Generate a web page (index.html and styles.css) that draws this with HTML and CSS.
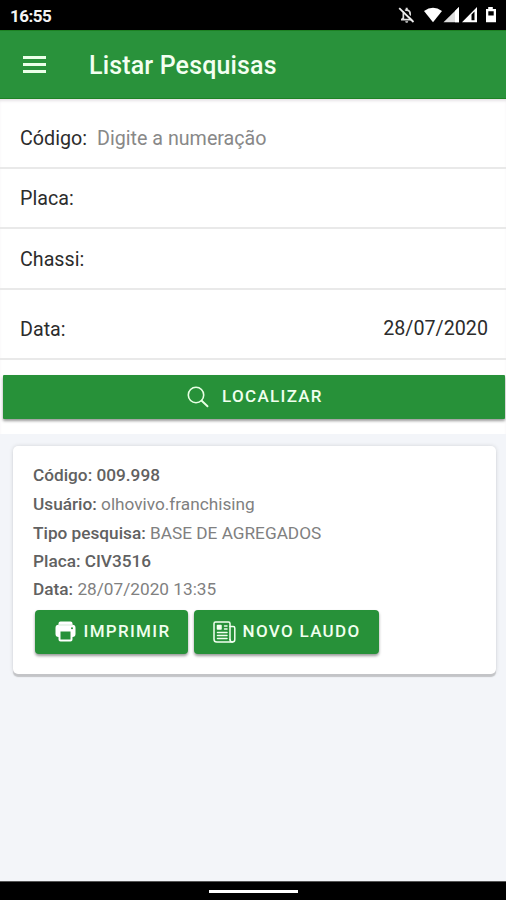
FILE: index.html
```html
<!DOCTYPE html>
<html lang="pt-BR">
<head>
<meta charset="utf-8">
<title>Listar Pesquisas</title>
<link rel="stylesheet" href="styles.css">
</head>
<body>
<div class="app">
  <div class="status">
    <span class="clock">16:55</span>
    <svg class="status-icons" width="102" height="20" viewBox="0 0 102 20" fill="#fff">
      <path d="M3 15.500v-1.500l1.500-1.500V9a4.500 4.700 0 0 1 3.200-4.700V2.800h2v1.500A4.500 4.700 0 0 1 13 9v3.500l1.600 1.500v1.500zM6.200 13.800h5V8.900a2.500 2.800 0 0 0-5 0zM7.200 16.200h3a1.500 1.500 0 0 1-3 0z" fill="#ddd" fill-rule="evenodd"/>
      <path d="M2.500 2.200L17 16" stroke="#000" stroke-width="1.600"/>
      <path d="M1.200 3.200L15.500 17" stroke="#eee" stroke-width="1.800"/>
      <path d="M26 6Q35-.5 44 6L35 17.200z"/>
      <path d="M45.500 17.200H61V2z" fill="#ddd"/><path d="M57 6L61 2v15.200h-4z"/>
      <path d="M64 17.200H79V2zM73.500 9.500v5.800h3V6.500z" fill-rule="evenodd"/>
      <path d="M88 4h2.200V2h4.600v2H98v13.200H88zM90.300 6.300v4.200h5.400V6.300z" fill-rule="evenodd"/>
    </svg>
  </div>
  <header class="toolbar">
    <div class="menu"><i></i><i></i><i></i></div>
    <h1>Listar Pesquisas</h1>
  </header>
  <main class="content">
    <section class="search">
      <div class="field code"><label>Código:</label><span class="hint">Digite a numeração</span></div>
      <div class="field plate"><label>Placa:</label></div>
      <div class="field chassis"><label>Chassi:</label></div>
      <div class="field date"><label>Data:</label><span class="value">28/07/2020</span></div>
      <button class="btn find">
        <svg width="22" height="22" viewBox="0 0 22 22" fill="none" stroke="#e8ffe4" stroke-width="1.600" stroke-linecap="round"><circle cx="9" cy="9" r="7.700"/><path d="M14.700 14.700L20.500 20.300" stroke-width="1.900"/></svg>
        <span>LOCALIZAR</span>
      </button>
    </section>
    <article class="card">
      <p class="l1"><b>Código: 009.998</b></p>
      <p class="l2"><b>Usuário:</b> <span>olhovivo.franchising</span></p>
      <p class="l3"><b>Tipo pesquisa:</b> <span>BASE DE AGREGADOS</span></p>
      <p class="l4"><b>Placa: CIV3516</b></p>
      <p class="l5"><b>Data:</b> <span>28/07/2020 13:35</span></p>
      <div class="actions">
        <button class="btn print">
          <svg width="21" height="21" viewBox="0 0 21 21" fill="#fff"><path d="M5.500.5h10A2 2 0 0 1 17.500 2.500v1.300H3.500V2.500A2 2 0 0 1 5.500.5zM3.500 3.800h14a3 3 0 0 1 3 3V13a3 3 0 0 1-3 3v2.500a2 2 0 0 1-2 2h-10a2 2 0 0 1-2-2V16a3 3 0 0 1-3-3V6.800a3 3 0 0 1 3-3z"/><path d="M5.500 10.500h10v8h-10z" fill="#279139"/><circle cx="17" cy="7.300" r="1" fill="#279139"/><path d="M3.500 4h14" stroke="#b9dcbf" stroke-width=".6"/></svg>
          <span>IMPRIMIR</span>
        </button>
        <button class="btn report">
          <svg width="23" height="22" viewBox="0 0 23 22" fill="none" stroke="#f2fff0" stroke-width="1.500" stroke-linecap="round" stroke-linejoin="round"><path d="M17 18.500V2.500Q17 1 15.500 1h-13Q1 1 1 2.500v15.700Q1 21 3.800 21h15.700"/><path d="M17 5.500h3.200Q21.800 5.500 21.800 7v11.500Q21.800 21 19.400 21 17 21 17 18.500"/><path d="M11.500 5H14M11.500 8H14M4.500 11.500H14M4.500 14.500H14M4.500 17.500H14"/><path d="M4.500 4.500H8V8H4.500z" fill="#f2fff0"/></svg>
          <span>NOVO LAUDO</span>
        </button>
      </div>
    </article>
  </main>
  <footer class="nav"><i></i></footer>
</div>
</body>
</html>
```
FILE: styles.css
```css
* { box-sizing: border-box; }
body { margin: 0; font-family: Roboto, "Liberation Sans", sans-serif; }
.app { width: 506px; height: 900px; display: flex; flex-direction: column; overflow: hidden; background: #f3f5f9; }
.status { height: 30px; flex: none; background: #000; display: flex; justify-content: space-between; padding: 5px 6px 0 10px; }
.clock { color: #f4f4f4; font: 700 17px/22px Roboto, sans-serif; letter-spacing: -.5px; }
.toolbar { height: 69px; flex: none; background: #29923b; display: flex; align-items: center; padding-left: 23px; border-top: 1px solid #1d8224; border-bottom: 1px solid #1d8224; }
.menu { width: 23px; display: flex; flex-direction: column; gap: 4px; }
.menu i { height: 3px; background: #eaffe8; }
h1 { margin: 2px 0 0 43px; font-size: 25px; line-height: 32px; font-weight: 500; letter-spacing: .15px; color: #f3fff1; }
.content { flex: 1; }
.search { height: 335px; background: #fff; display: flex; flex-direction: column; box-shadow: inset 0 3px 3px -1px #e6e2e6; }
.field { display: flex; padding: 0 18px 0 20px; border-bottom: 2px solid #e9e9e9; font-size: 19.7px; line-height: 24px; color: #2c2c2c; }
.code { height: 70px; padding-top: 28px; }
.plate { height: 60px; padding-top: 18px; }
.chassis { height: 61px; padding-top: 19px; }
.date { height: 70px; padding-top: 28px; justify-content: space-between; }
.hint { color: #888; margin-left: 10px; }
.value { margin-top: -1px; }
.btn { display: flex; align-items: center; justify-content: center; border: 0; padding: 0; margin: 0; height: 44px; background: #279139; color: #f0ffee; font: 500 17px/22px Roboto, sans-serif; letter-spacing: 1.3px; border-radius: 4px; box-shadow: 0 2px 3px #0006; }
.btn span { margin-top: -2px; }
.find { margin: 15px 1px 0 3px; padding-left: 2px; border-radius: 1px; gap: 13px; }
.card { height: 228px; margin: 12px 10px 0 13px; padding: 15px 20px 0; background: #fff; border-radius: 5px; box-shadow: 0 3px 1px #c3c4c7, 0 0 4px #0002; }
.card p { margin: 0; height: 28.4px; font-size: 17.23px; line-height: 28.4px; color: #808080; white-space: nowrap; }
.card .l2, .card .l3, .card .l4 { padding-top: 1px; }
.card b { font-weight: 500; color: #616161; }
.actions { display: flex; gap: 6px; margin: 7px 0 0 2px; }
.print { width: 153px; gap: 8px; padding-left: 2px; }
.report { width: 185px; gap: 7px; }
.nav { height: 19px; flex: none; background: #000; display: flex; justify-content: center; padding-top: 8px; border-top: 1px solid #555; }
.nav i { width: 89px; height: 3px; background: #fff; }
```
